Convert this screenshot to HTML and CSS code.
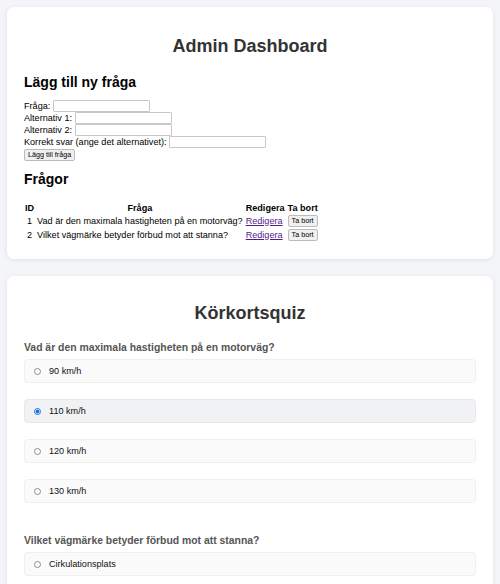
FILE: index.html
```html
<!DOCTYPE html>
<html lang="sv">
<head>
<meta charset="utf-8">
<title>Admin Dashboard</title>
<link rel="stylesheet" href="styles.css">
</head>
<body>
<div class="card admin">
  <h1 class="title">Admin Dashboard</h1>
  <h2 class="section">Lägg till ny fråga</h2>
  <form class="add-form">
    <label>Fråga:</label> <input class="field" type="text"><br>
    <label>Alternativ 1:</label> <input class="field" type="text"><br>
    <label>Alternativ 2:</label> <input class="field" type="text"><br>
    <label>Korrekt svar (ange det alternativet):</label> <input class="field" type="text"><br>
    <button class="btn" type="button">Lägg till fråga</button>
  </form>
  <h2 class="section section-list">Frågor</h2>
  <table class="qtable">
    <thead>
      <tr><th>ID</th><th>Fråga</th><th>Redigera</th><th>Ta bort</th></tr>
    </thead>
    <tbody>
      <tr><td>1</td><td>Vad är den maximala hastigheten på en motorväg?</td><td><a href="#" class="link">Redigera</a></td><td><button class="btn" type="button">Ta bort</button></td></tr>
      <tr><td>2</td><td>Vilket vägmärke betyder förbud mot att stanna?</td><td><a href="#" class="link">Redigera</a></td><td><button class="btn" type="button">Ta bort</button></td></tr>
    </tbody>
  </table>
</div>

<div class="card quiz">
  <h1 class="title quiz-title">Körkortsquiz</h1>
  <div class="question">
    <h3 class="qtext">Vad är den maximala hastigheten på en motorväg?</h3>
    <label class="option"><span class="radio"></span>90 km/h</label>
    <label class="option hover"><span class="radio checked"></span>110 km/h</label>
    <label class="option"><span class="radio"></span>120 km/h</label>
    <label class="option"><span class="radio"></span>130 km/h</label>
  </div>
  <div class="question">
    <h3 class="qtext">Vilket vägmärke betyder förbud mot att stanna?</h3>
    <label class="option"><span class="radio"></span>Cirkulationsplats</label>
  </div>
</div>
</body>
</html>
```

FILE: styles.css
```css
html, body {
  margin: 0;
  padding: 0;
}
body {
  background: #f3f5f9;
  font-family: "Liberation Sans", Arial, sans-serif;
  font-size: 9.1px;
  color: #000;
  padding: 7px;
}
.card {
  background: #fff;
  border-radius: 7px;
  box-shadow: 0 1px 5px rgba(0, 0, 0, 0.08);
  padding: 17px;
  margin-bottom: 17px;
}
.title {
  font-size: 18px;
  font-weight: bold;
  color: #333;
  text-align: center;
  margin: 12px 0 17px;
  line-height: 21px;
}
.quiz-title {
  margin: 10px 0 18px;
}
.section {
  font-size: 14px;
  font-weight: bold;
  margin: 0 0 10px;
  line-height: 16px;
}
.section-list {
  margin: 10px 0 14px;
}
.add-form {
  line-height: 12px;
}
.field {
  width: 97px;
  height: 12px;
  box-sizing: border-box;
  border: 1px solid #c8c8c8;
  border-radius: 1px;
  padding: 0 2px;
  margin: 0;
  font-size: 7.6px;
  vertical-align: bottom;
}
.btn {
  font-family: "Liberation Sans", Arial, sans-serif;
  font-size: 7.2px;
  height: 12px;
  padding: 0 3px;
  border: 1px solid #bcbcbc;
  border-radius: 2px;
  background: #f0f0f0;
  color: #000;
  line-height: 10px;
}
.qtable {
  border-spacing: 1px 1.5px;
  font-size: 9.1px;
  margin-left: -1px;
}
.qtable th, .qtable td {
  padding: 0.5px 1px;
}
.qtable td:first-child {
  text-align: center;
  padding: 0.5px 2px;
}
.link {
  color: #551a8b;
}
.question {
  margin-bottom: 32px;
}
.qtext {
  font-size: 10.4px;
  font-weight: bold;
  color: #555;
  margin: 0 0 5px;
  line-height: 12px;
}
.option {
  display: flex;
  align-items: center;
  height: 24px;
  box-sizing: border-box;
  padding: 0 9px;
  background: #fafafa;
  border: 1px solid #efefef;
  border-radius: 4px;
  margin-bottom: 16px;
  color: #111;
}
.option.hover {
  background: #f1f2f4;
  border-color: #e8e8ea;
}
.radio {
  width: 7px;
  height: 7px;
  box-sizing: border-box;
  border: 1px solid #8f8f8f;
  border-radius: 50%;
  background: #fff;
  margin-right: 8px;
  flex: none;
}
.radio.checked {
  border-color: #1a73e8;
  background: radial-gradient(circle, #1a73e8 0 1.8px, #fff 2.2px);
}
```
